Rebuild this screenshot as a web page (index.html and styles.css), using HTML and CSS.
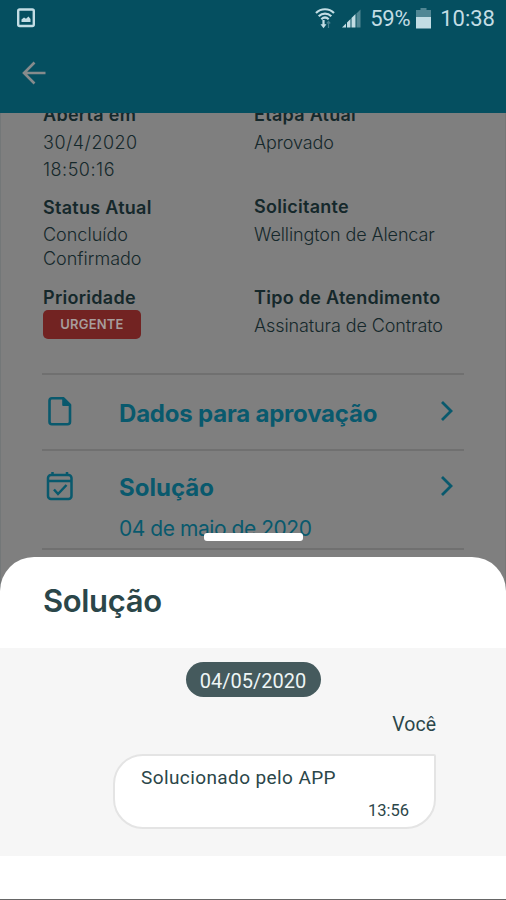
FILE: index.html
```
<!DOCTYPE html>
<html lang="pt-BR">
<head>
  <meta charset="UTF-8" />
  <meta name="viewport" content="width=device-width, initial-scale=1.0"/>
  <title>Solução</title>
  <link rel="stylesheet" href="styles.css">
</head>
<body>
  <div class="screen">

    <!-- HEADER -->
    <header class="header">
      <div class="status-bar">
        <svg class="status-picture" width="18" height="20" viewBox="0 0 18 20">
          <rect x="1.2" y="1.5" width="15.6" height="16.5" rx="1.5" fill="none" stroke="currentColor" stroke-width="2.4"/>
          <path d="M4.5 14V11.5L7 9.5L9 10.8L11.5 8.5L13.5 11V14Z" fill="currentColor"/>
        </svg>
        <svg class="status-wifi" width="20" height="21" viewBox="0 0 20 21" fill="none" stroke="currentColor" stroke-width="2.2">
          <path d="M1 5C6 0 14 0 19 5M3.7 8.2C7.3 4.7 12.7 4.7 16.3 8.2M6.3 11.2C8.5 9.2 11.5 9.2 13.7 11.2"/>
          <path d="M8.5 12V18"/>
          <path d="M5.5 16.3L8.5 20.2L11.5 16.3Z" fill="currentColor" stroke="none"/>
          <path d="M13.5 20V14M11.8 15.5L13.5 13.5L15.2 15.5" stroke-width="1.2" opacity=".35"/>
        </svg>
        <svg class="status-signal" width="19" height="19" viewBox="0 0 19 19" fill="currentColor">
          <path d="M0 18.5L4 14.5V18.5ZM5 13.5L8.5 10V18.5H5ZM9.5 9L13.5 5V18.5H9.5Z"/>
          <path d="M14.5 4.5L18.5 .5V18.5H14.5Z" opacity=".4"/>
        </svg>
        <span class="status-percent">59%</span>
        <svg class="status-battery" width="15" height="21" viewBox="0 0 15 21" fill="currentColor">
          <path d="M4.5 0H10.5V2H15V9H0V2H4.5Z" opacity=".4"/>
          <path d="M0 9H15V20.5H0Z"/>
        </svg>
        <span class="status-time">10:38</span>
      </div>
      <svg class="back" width="24" height="24" viewBox="0 0 24 24" fill="none" stroke="currentColor" stroke-width="2.6">
        <path d="M23.5 12H2M12.5 1.5L2 12L12.5 22.5"/>
      </svg>
    </header>

    <!-- TICKET DETAILS -->
    <main class="details">
      <div class="info">
        <div class="info-col">
          <div class="item">
            <h3>Aberta em</h3>
            <p class="date">30/4/2020<br>18:50:16</p>
          </div>
          <div class="item item-status">
            <h3>Status Atual</h3>
            <p class="tight">Concluído<br>Confirmado</p>
          </div>
          <div class="item item-priority">
            <h3>Prioridade</h3>
            <span class="badge">URGENTE</span>
          </div>
        </div>
        <div class="info-col">
          <div class="item">
            <h3>Etapa Atual</h3>
            <p>Aprovado</p>
          </div>
          <div class="item item-requester">
            <h3>Solicitante</h3>
            <p>Wellington de Alencar</p>
          </div>
          <div class="item item-type">
            <h3>Tipo de Atendimento</h3>
            <p>Assinatura de Contrato</p>
          </div>
        </div>
      </div>

      <div class="row">
        <svg class="row-icon" width="34" height="34" viewBox="0 0 34 34" fill="none" stroke="currentColor" stroke-width="2.6" stroke-linejoin="round">
          <path d="M21.5 4.3H10Q7.5 4.300 7.500 6.800V27.700Q7.500 30.200 10 30.200H25.500Q28 30.200 28 27.700V10.800Z"/>
          <path d="M21.200 4.500V11H27.800Z" fill="currentColor" stroke-width="2"/>
        </svg>
        <div class="row-text">
          <h2>Dados para aprovação</h2>
        </div>
        <svg class="chevron" width="14" height="22" viewBox="0 0 14 22" fill="none" stroke="currentColor" stroke-width="2.8">
          <path d="M2 2L11 11L2 20"/>
        </svg>
      </div>
      <div class="row row-solution">
        <svg class="row-icon" width="34" height="34" viewBox="0 0 34 34" fill="none" stroke="currentColor" stroke-width="2.5">
          <rect x="6" y="6" width="23.5" height="24" rx="3"/>
          <path d="M6 12H29M10.500 3V7M25 3V7M12 20.500L16 25L24.500 16"/>
        </svg>
        <div class="row-text">
          <h2>Solução</h2>
          <p>04 de maio de 2020</p>
        </div>
        <svg class="chevron" width="14" height="22" viewBox="0 0 14 22" fill="none" stroke="currentColor" stroke-width="2.8">
          <path d="M2 2L11 11L2 20"/>
        </svg>
      </div>
    </main>

    <!-- BOTTOM SHEET -->
    <section class="sheet">
      <div class="handle"></div>
      <h1>Solução</h1>
      <div class="chat">
        <span class="day">04/05/2020</span>
        <span class="author">Você</span>
        <div class="bubble">
          <p>Solucionado pelo APP</p>
          <time>13:56</time>
        </div>
      </div>
    </section>

  </div>
</body>
</html>
```

FILE: styles.css
```
* {
  box-sizing: border-box;
}
body {
  margin: 0;
  font-family: Inter, "Liberation Sans", sans-serif;
}
h1, h2, h3, p {
  margin: 0;
}
svg {
  display: block;
  flex: none;
}
.screen {
  position: relative;
  display: flex;
  flex-direction: column;
  width: 506px;
  height: 900px;
  overflow: hidden;
  background: #7f7f7f;
}

/* header */
.header {
  height: 113px;
  flex: none;
  background: #054f60;
}
.status-bar {
  display: flex;
  align-items: center;
  height: 36px;
  padding: 0 11px 0 17px;
  color: #c3dde4;
  font-family: Roboto, sans-serif;
  font-size: 22px;
}
.status-wifi {
  margin-left: auto;
}
.status-signal {
  margin-left: 7px;
}
.status-percent {
  margin-left: 9px;
  letter-spacing: -0.3px;
}
.status-battery {
  margin-left: 6px;
}
.status-time {
  margin-left: 9px;
}
.back {
  margin: 25px 0 0 22px;
  color: #868b8c;
}

/* details */
.details {
  flex: 1;
  overflow: hidden;
  padding: 0 42px;
  box-shadow: inset 1px 0 #737778, inset -1px 0 #777;
  white-space: nowrap;
}
.info {
  display: grid;
  grid-template-columns: 211px 1fr;
  height: 271px;
  margin-top: -11px;
  padding-left: 1px;
  color: #15282b;
}
.info h3 {
  font-size: 18px;
  font-weight: 600;
  line-height: 26px;
  letter-spacing: 0.28px;
}
.info p {
  margin-top: 1px;
  font-size: 18px;
  font-weight: 300;
  line-height: 27px;
  letter-spacing: -0.1px;
}
.info .date {
  letter-spacing: 0.5px;
}
.item-status {
  margin-top: 12px;
}
.info .tight {
  margin-top: 2px;
  line-height: 24px;
  letter-spacing: 0;
}
.item-priority {
  margin-top: 14px;
}
.item-requester {
  margin-top: 38px;
}
.item-type {
  margin-top: 37px;
}
.badge {
  display: block;
  width: 98px;
  height: 29px;
  margin-top: -1px;
  border-radius: 5px;
  background: #722322;
  color: #a79c9c;
  font-size: 13px;
  font-weight: 600;
  line-height: 29px;
  letter-spacing: 0.2px;
  text-align: center;
}
.row {
  display: flex;
  height: 76px;
  padding-right: 10px;
  border-top: 2px solid #707070;
  color: #09596d;
}
.row-solution {
  height: 101px;
  border-bottom: 2px solid #707070;
}
.row-icon {
  margin-top: 19px;
}
.row-text {
  flex: 1;
  margin-left: 43px;
}
.row h2 {
  margin-top: 23px;
  font-size: 24px;
  font-weight: 650;
  line-height: 32px;
  letter-spacing: -0.2px;
}
.row p {
  margin-top: 11px;
  font-size: 21px;
  font-weight: 400;
  line-height: 28px;
  letter-spacing: -0.45px;
}
.chevron {
  margin-top: 25px;
}
.row-solution .row-icon {
  margin-top: 18px;
}
.row-solution h2 {
  margin-top: 21px;
  letter-spacing: 0;
}
.row-solution .chevron {
  margin-top: 24px;
}

/* bottom sheet */
.sheet {
  position: absolute;
  left: 0;
  right: 0;
  bottom: 0;
  height: 343px;
  border-bottom: 1px solid #666;
  border-radius: 34px 34px 0 0;
  background: #fff;
  color: #2b4649;
}
.handle {
  position: absolute;
  top: -24px;
  left: 204px;
  width: 99px;
  height: 8px;
  border-radius: 3px;
  background: #fff;
}
.sheet h1 {
  height: 91px;
  padding: 23px 43px 0;
  font-size: 31px;
  font-weight: 600;
  line-height: 42px;
  letter-spacing: -0.35px;
}
.chat {
  display: flex;
  flex-direction: column;
  align-items: flex-end;
  height: 208px;
  padding: 14px 70px 0;
  background: #f6f6f6;
  font-family: Roboto, sans-serif;
}
.day {
  align-self: center;
  width: 135px;
  height: 35px;
  border-radius: 18px;
  background: #455a5d;
  color: #eef5f5;
  font-size: 20px;
  line-height: 38px;
  text-align: center;
}
.author {
  margin-top: 15px;
  font-size: 19.5px;
  line-height: 25px;
}
.bubble {
  display: flex;
  flex-direction: column;
  width: 323px;
  height: 75px;
  margin-top: 17px;
  padding: 9px 25px 0 26px;
  border: 2px solid #e4e4e4;
  border-radius: 30px 2px 30px 30px;
  background: #fff;
}
.bubble p {
  font-size: 19px;
  line-height: 25px;
  letter-spacing: 0.4px;
}
.bubble time {
  align-self: flex-end;
  margin-top: 10px;
  font-size: 16.5px;
  line-height: 22px;
}
```
